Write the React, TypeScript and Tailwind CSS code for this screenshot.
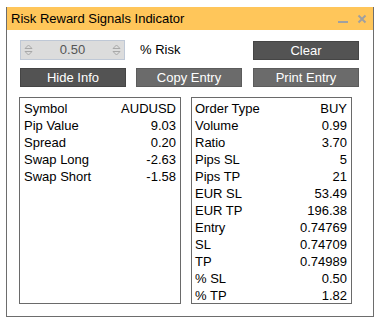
import React from 'react';

const leftRows: [string, string][] = [
  ['Symbol', 'AUDUSD'],
  ['Pip Value', '9.03'],
  ['Spread', '0.20'],
  ['Swap Long', '-2.63'],
  ['Swap Short', '-1.58'],
];

const rightRows: [string, string][] = [
  ['Order Type', 'BUY'],
  ['Volume', '0.99'],
  ['Ratio', '3.70'],
  ['Pips SL', '5'],
  ['Pips TP', '21'],
  ['EUR SL', '53.49'],
  ['EUR TP', '196.38'],
  ['Entry', '0.74769'],
  ['SL', '0.74709'],
  ['TP', '0.74989'],
  ['% SL', '0.50'],
  ['% TP', '1.82'],
];

const Arrows = () => (
  <svg width="9" height="14" viewBox="0 0 9 14" className="shrink-0">
    <path d="M1 5.5 L4.5 2 L8 5.5 Z" fill="none" stroke="#a8a8a8" strokeWidth="1" />
    <path d="M1 8.5 L4.5 12 L8 8.5 Z" fill="none" stroke="#a8a8a8" strokeWidth="1" />
  </svg>
);

const Btn = ({ label, dark, className = '' }: { label: string; dark?: boolean; className?: string }) => (
  <button
    className={`h-[19px] w-[106px] flex items-center justify-center text-[13px] leading-none text-white border ${
      dark ? 'bg-[#535353] border-[#454545]' : 'bg-[#6b6b6b] border-[#5c5c5c]'
    } ${className}`}
  >
    {label}
  </button>
);

const InfoBox = ({ rows, className = '' }: { rows: [string, string][]; className?: string }) => (
  <div className={`h-[207px] border border-[#6a6a6a] pt-[2px] ${className}`}>
    {rows.map(([k, v], i) => (
      <div key={i} className="flex justify-between h-[17px] leading-[17px] text-[13px] text-black">
        <span>{k}</span>
        <span>{v}</span>
      </div>
    ))}
  </div>
);

export default function App() {
  return (
    <div className="w-[392px] h-[330px] bg-white pt-[7px] pl-[6px]" style={{ fontFamily: '"Liberation Sans", Arial, sans-serif' }}>
      <div className="w-[368px] h-[310px] border border-[#6d6d6d] border-t-0 bg-white">
        <div className="h-[23px] bg-[#ffc65a] flex items-center pl-[4px] pr-[6px]">
          <span className="text-[13px] text-black">Risk Reward Signals Indicator</span>
          <div className="ml-auto flex items-center gap-[9px]">
            <div className="w-[10px] h-[2px] bg-[#a0a0a0] mt-[6px]" />
            <svg width="10" height="10" viewBox="0 0 10 10">
              <path d="M1.5 1.5 L8.5 8.5 M8.5 1.5 L1.5 8.5" stroke="#a0a0a0" strokeWidth="2" />
            </svg>
          </div>
        </div>

        <div className="flex items-center pl-[13px] mt-[10px]">
          <div className="w-[105px] h-[20px] bg-[#dcdcdc] border border-[#bfc8d6] flex items-center px-[3px]">
            <Arrows />
            <span className="flex-1 text-center text-[13px] text-[#555]">0.50</span>
            <Arrows />
          </div>
          <span className="ml-[15px] w-[113px] text-[13px] text-black">% Risk</span>
          <Btn label="Clear" dark />
        </div>

        <div className="flex items-center pl-[13px] mt-[8px]">
          <Btn label="Hide Info" dark />
          <Btn label="Copy Entry" className="ml-[10px]" />
          <Btn label="Print Entry" className="ml-[11px]" />
        </div>

        <div className="flex pl-[12px] mt-[10px]">
          <InfoBox rows={leftRows} className="w-[162px] pl-[4px] pr-[4px]" />
          <InfoBox rows={rightRows} className="w-[161px] ml-[10px] pl-[3px] pr-[4px]" />
        </div>
      </div>
    </div>
  );
}
